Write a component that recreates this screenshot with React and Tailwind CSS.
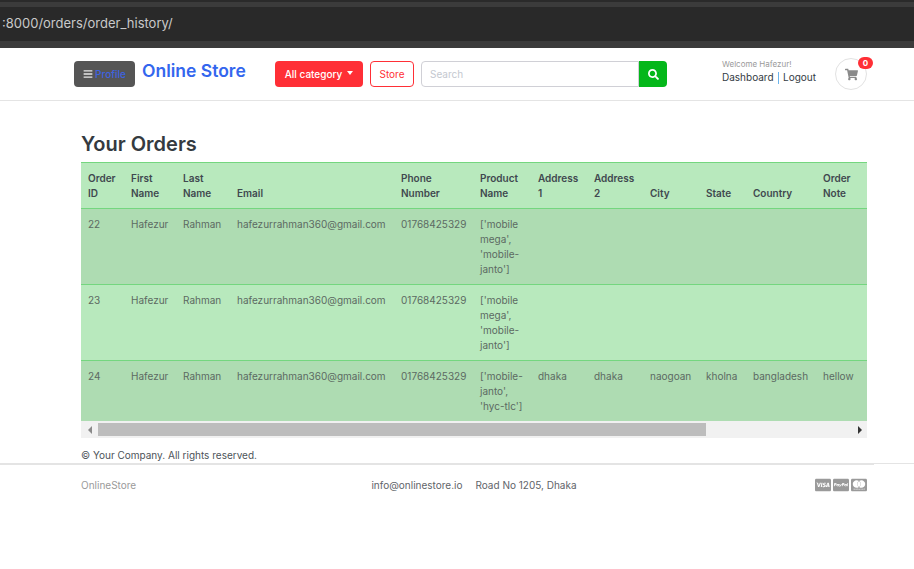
import { FaBars, FaSearch, FaShoppingCart, FaCcVisa, FaCcPaypal, FaCcMastercard } from 'react-icons/fa';

const columns = [
    { key: 'id', width: 43, label: ['Order', 'ID'] },
    { key: 'first', width: 52, label: ['First', 'Name'] },
    { key: 'last', width: 54, label: ['Last', 'Name'] },
    { key: 'email', width: 164, label: ['Email'] },
    { key: 'phone', width: 79, label: ['Phone', 'Number'] },
    { key: 'product', width: 58, label: ['Product', 'Name'] },
    { key: 'addr1', width: 56, label: ['Address', '1'] },
    { key: 'addr2', width: 56, label: ['Address', '2'] },
    { key: 'city', width: 56, label: ['City'] },
    { key: 'state', width: 47, label: ['State'] },
    { key: 'country', width: 70, label: ['Country'] },
    { key: 'note', width: 51, label: ['Order', 'Note'] },
];

const orders = [
    { id: 22, first: 'Hafezur', last: 'Rahman', email: 'hafezurrahman360@gmail.com', phone: '01768425329', product: ["['mobile", "mega',", "'mobile-", "janto']"] },
    { id: 23, first: 'Hafezur', last: 'Rahman', email: 'hafezurrahman360@gmail.com', phone: '01768425329', product: ["['mobile", "mega',", "'mobile-", "janto']"] },
    { id: 24, first: 'Hafezur', last: 'Rahman', email: 'hafezurrahman360@gmail.com', phone: '01768425329', product: ["['mobile-", "janto',", "'hyc-tlc']"], addr1: 'dhaka', addr2: 'dhaka', city: 'naogoan', state: 'kholna', country: 'bangladesh', note: 'hellow' },
];

function BrowserBar() {
    return (
        <div className="h-[48px] bg-[#3b3b3b] flex flex-col">
            <div className="h-[7px] bg-[#3b3b3b] border-t-2 border-[#2a2a2a]" />
            <div className="h-[34px] bg-[#292929] flex items-center text-[#c9c9c9] text-[13px] pl-[2px]">:8000/orders/order_history/</div>
        </div>
    );
}

function Header() {
    return (
        <header className="h-[53px] border-b border-[#e4e4e4] pl-[74px] pr-[47px] flex items-center whitespace-nowrap">
            <button className="w-[61px] h-[26px] bg-[#555555] rounded-[4px] flex items-center justify-center gap-[2px] text-[10px] font-medium text-[#3d63e0]">
                <FaBars className="text-[#e8e8e8] text-[10px]" /> Profile
            </button>
            <div className="ml-[7px] w-[126px] mb-[6px] text-[17.5px] font-semibold text-[#3366ee]">Online Store</div>
            <button className="ml-[7px] w-[88px] h-[26px] bg-[#ff2f36] rounded-[4px] flex items-center justify-center text-[10px] font-medium text-white">
                All category
                <span className="ml-[5px] mb-[2px] border-x-[3.5px] border-t-[4px] border-x-transparent border-t-white" />
            </button>
            <button className="ml-[7px] w-[44px] h-[26px] border border-[#ff2f36] rounded-[4px] text-[10px] text-[#ff2f36]">Store</button>
            <div className="ml-[7px] flex w-[246px] h-[26px]">
                <div className="flex-1 border border-[#d0d0d6] rounded-l-[4px] flex items-center pl-[8px] text-[10px] text-[#c4c8cf]">Search</div>
                <button className="w-[28px] bg-[#04b71a] rounded-r-[4px] flex items-center justify-center">
                    <FaSearch className="text-white text-[11px]" />
                </button>
            </div>
            <div className="ml-[55px] mb-[5px]">
                <div className="text-[8px] leading-[12px] text-[#9a9a9a]">Welcome Hafezur!</div>
                <div className="text-[10px] leading-[15px] text-[#333b44] flex items-center">
                    Dashboard<span className="mx-[4px] w-[1.5px] h-[12px] bg-[#6db5ec]" />Logout
                </div>
            </div>
            <div className="relative ml-auto w-[32px] h-[32px] rounded-full border border-[#e2e2e2] flex items-center justify-center">
                <FaShoppingCart className="text-[#8a8a8a] text-[13px]" />
                <span className="absolute top-[-2px] right-[-7px] w-[15px] h-[12px] rounded-full bg-[#ff2f36] text-white text-[8px] font-bold flex items-center justify-center">0</span>
            </div>
        </header>
    );
}

function OrdersTable() {
    return (
        <div className="w-[786px] overflow-hidden">
            <table className="table-fixed w-[786px] border-separate border-spacing-0 text-[10px] leading-[15px]">
                <colgroup>
                    {columns.map((col) => <col key={col.key} width={col.width} />)}
                </colgroup>
                <thead>
                    <tr className="bg-[#b8e9bd]">
                        {columns.map((col) => (
                            <th key={col.key} className="px-[7px] pt-[8px] pb-[7px] border-y border-[#74d67f] text-left align-bottom font-semibold text-[#40484f]">
                                {col.label.map((line) => <div key={line}>{line}</div>)}
                            </th>
                        ))}
                    </tr>
                </thead>
                <tbody>
                    {orders.map((order, i) => (
                        <tr key={order.id} className={i % 2 === 0 ? 'bg-[#aedcb2]' : 'bg-[#b8e9bd]'}>
                            {columns.map((col) => (
                                <td key={col.key} className={`px-[7px] pt-[8px] pb-[7px] align-top text-[#5c6a62] whitespace-nowrap ${i < 2 ? 'border-b border-[#74d67f]' : ''}`}>
                                    {col.key === 'product'
                                        ? order.product.map((line) => <div key={line}>{line}</div>)
                                        : order[col.key]}
                                </td>
                            ))}
                        </tr>
                    ))}
                </tbody>
            </table>
            <div className="h-[17px] bg-[#f1f1f1] flex items-center">
                <div className="w-[17px] flex justify-center">
                    <span className="border-y-[4px] border-r-[4px] border-y-transparent border-r-[#8a8a8a]" />
                </div>
                <div className="w-[608px] h-[13px] bg-[#bdbdbd]" />
                <div className="flex-1 flex justify-end pr-[5px]">
                    <span className="border-y-[4px] border-l-[4px] border-y-transparent border-l-[#333333]" />
                </div>
            </div>
        </div>
    );
}

export default function App() {
    return (
        <div className="min-h-[569px] bg-white font-['Inter',sans-serif] overflow-hidden">
            <BrowserBar />
            <Header />
            <main className="pl-[81px]">
                <h1 className="mt-[31px] h-[30px] text-[20px] leading-[24px] font-semibold text-[#343a40]">Your Orders</h1>
                <OrdersTable />
                <p className="mt-[10px] text-[10px] leading-[14px] text-[#4d5359]">© Your Company. All rights reserved.</p>
            </main>
            <div className="mt-[1px] h-px bg-[#e4e4e4]" />
            <div className="h-px bg-[#e4e4e4] w-[874px]" />
            <footer className="h-[40px] pl-[81px] pr-[47px] flex items-center justify-between text-[10px]">
                <span className="w-[250px] text-[#9a9a9a]">OnlineStore</span>
                <div className="flex gap-[13px] text-[#5f6469]">
                    <span>info@onlinestore.io</span>
                    <span>Road No 1205, Dhaka</span>
                </div>
                <div className="w-[250px] flex justify-end gap-[2px] text-[#9a9a9a] text-[16px]">
                    <FaCcVisa />
                    <FaCcPaypal />
                    <FaCcMastercard />
                </div>
            </footer>
        </div>
    );
}
